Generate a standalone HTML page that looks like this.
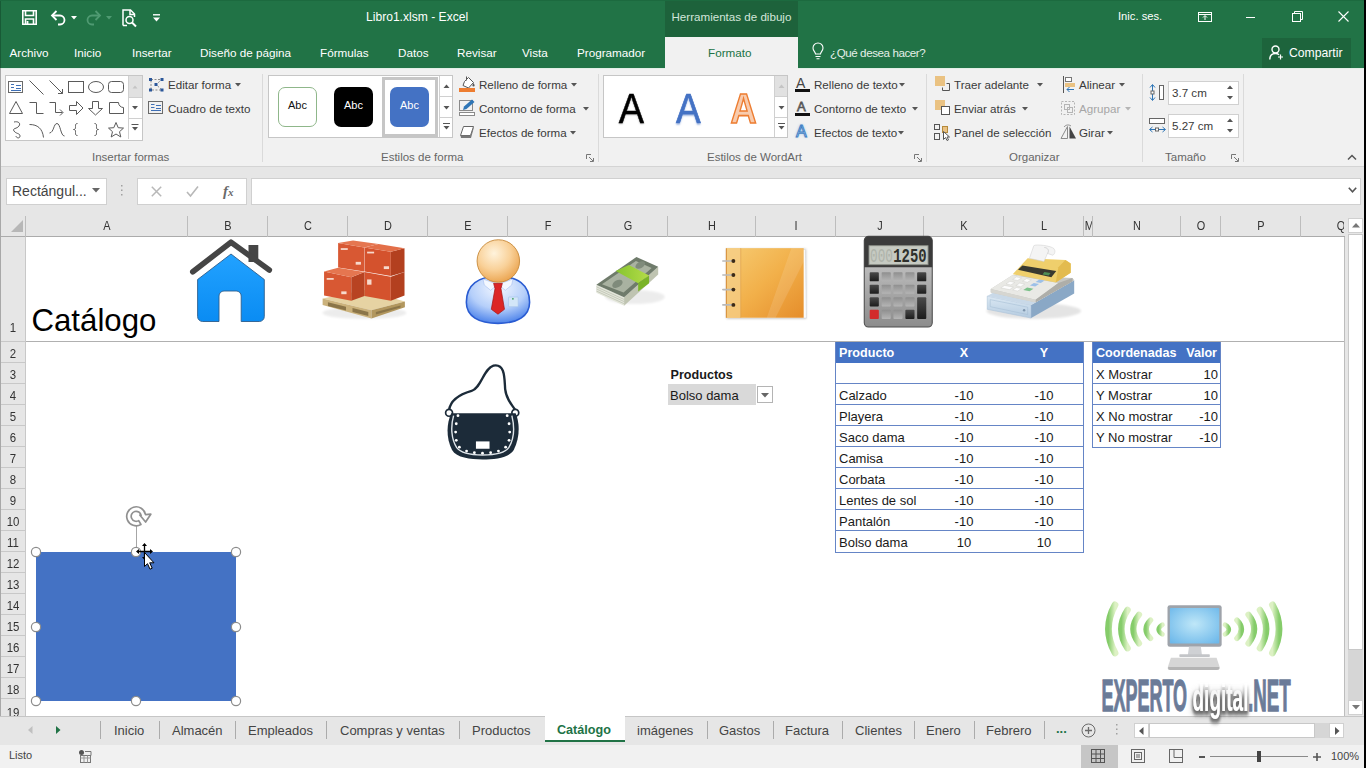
<!DOCTYPE html>
<html lang="es">
<head>
<meta charset="utf-8">
<title>Libro1.xlsm - Excel</title>
<style>
*{box-sizing:border-box;margin:0;padding:0}
html,body{width:1366px;height:768px;overflow:hidden;background:#fff}
body{font-family:"Liberation Sans",sans-serif;font-size:12px;color:#444;position:relative}
.a{position:absolute}
.t{position:absolute;white-space:nowrap;line-height:1}
svg{position:absolute;overflow:visible}
/* title */
#title{left:0;top:0;width:1366px;height:68px;background:#217346}
#ctx{left:665px;top:0;width:133px;height:37px;background:#1d623b}
#fmt{left:665px;top:37px;width:133px;height:31px;background:#f1f1f1}
#share{left:1262px;top:38px;width:89px;height:30px;background:#1d643c}
.tt{color:#fff;font-size:12.5px}
.tab{color:#fff;font-size:11.7px;top:47px}
/* ribbon */
#ribbon{left:0;top:68px;width:1366px;height:99px;background:#f1f1f1;border-bottom:1px solid #d4d4d4}
.sep{width:1px;top:74px;height:88px;background:#dadada}
.rl{font-size:11.6px;color:#3a3a3a}
.gl{font-size:11.5px;color:#666;top:152px}
.gal{background:#fff;border:1px solid #c6c6c6}
/* formula bar */
#fbar{left:0;top:167px;width:1366px;height:48px;background:#e6e6e6}
.box{background:#fff;border:1px solid #d0d0d0}
/* grid */
#colh{left:0;top:215px;width:1345px;height:22px;background:#e6e6e6;border-bottom:1px solid #ababab}
#rowh{left:0;top:237px;width:26px;height:479px;background:#e6e6e6;border-right:1px solid #c8c8c8}
.ch{font-size:13px;color:#333;top:219px;text-align:center;transform:scaleX(.84)}
.rh{font-size:13px;color:#333;width:21px;text-align:right;left:0;transform:scaleX(.88)}
.cv{width:1px;top:216px;height:21px;background:#bdbdbd}
.rv{height:1px;left:0;width:25px;background:#c8c8c8}
.c{font-size:14px;color:#1a1a1a}
/* bottom */
#tabs{left:0;top:716px;width:1366px;height:29px;background:#e6e6e6;border-top:1px solid #c6c6c6}
#status{left:0;top:745px;width:1366px;height:23px;background:#f1f1f1}
.st{font-size:13px;color:#444;top:723.5px}
.sv{width:1px;top:721px;height:18px;background:#ababab}
</style>
</head>
<body>
<!-- TITLE BAR -->
<div class="a" id="title"></div>
<div class="a" id="ctx"></div>
<div class="a" id="fmt"></div>
<div class="a" id="share"></div>
<div class="t tt" style="left:366px;top:11px;font-size:12.1px">Libro1.xlsm  -  Excel</div>
<div class="t tt" style="left:671.5px;top:11px;font-size:11.6px;color:#d3e6da">Herramientas de dibujo</div>
<div class="t tt" style="left:1118px;top:11px;font-size:11.2px">Inic. ses.</div>
<div class="t tab" style="left:9.5px">Archivo</div>
<div class="t tab" style="left:74px">Inicio</div>
<div class="t tab" style="left:132px">Insertar</div>
<div class="t tab" style="left:200px">Diseño de página</div>
<div class="t tab" style="left:320px">Fórmulas</div>
<div class="t tab" style="left:398px">Datos</div>
<div class="t tab" style="left:457px">Revisar</div>
<div class="t tab" style="left:522px">Vista</div>
<div class="t tab" style="left:577px">Programador</div>
<div class="t tab" style="left:708px;color:#217346">Formato</div>
<div class="t tab" style="left:830px;color:#e4efe8;font-size:11.600px;letter-spacing:-.42px;top:47px">¿Qué desea hacer?</div>
<div class="t tab" style="left:1289px;font-size:12.200px;top:46.500px">Compartir</div>
<!-- QAT -->
<svg class="a" style="left:22px;top:10px" width="15" height="15" fill="none" stroke="#fff" stroke-width="1.600"><path d="M.8.8h13.400v13.400h-13.400z"/><path d="M3.500 1v4.500h8v-4.500" /><path d="M3.500 14v-5h8v5" /><path d="M5.500 11v3" stroke-width="1.800"/></svg>
<svg class="a" style="left:51px;top:10px" width="15" height="15" fill="none" stroke="#fff" stroke-width="1.800"><path d="M1 5.500h8a4.500 4.500 0 0 1 0 9h-2"/><path d="M5.500 1l-4.500 4.500 4.500 4.500"/></svg>
<svg class="a" style="left:71px;top:16px" width="6" height="4"><path d="M0 0h6l-3 3.500z" fill="#fff"/></svg>
<svg class="a" style="left:86px;top:10px" width="15" height="15" fill="none" stroke="#4f9a72" stroke-width="1.800"><path d="M14 5.500h-8a4.500 4.500 0 0 0 0 9h2"/><path d="M9.500 1l4.500 4.500-4.500 4.500"/></svg>
<svg class="a" style="left:106px;top:16px" width="6" height="4"><path d="M0 0h6l-3 3.500z" fill="#4f9a72"/></svg>
<svg class="a" style="left:122px;top:9px" width="16" height="18" fill="none" stroke="#fff" stroke-width="1.500"><path d="M1 16.500v-15.500h7.500l4 4v3"/><path d="M8 1v4.500h4.500"/><circle cx="7.500" cy="11" r="3.500"/><path d="M10 13.500l4 4" stroke-width="2"/><path d="M1 16.500h4"/></svg>
<svg class="a" style="left:153px;top:14px" width="7" height="8"><path d="M0 .8h7" stroke="#fff" stroke-width="1.400"/><path d="M0 3.500h7l-3.500 4z" fill="#fff"/></svg>
<!-- window controls -->
<svg class="a" style="left:1198px;top:12px" width="14" height="10" fill="none" stroke="#fff" stroke-width="1"><rect x=".5" y=".5" width="13" height="9"/><path d="M.5 2.500h13"/><path d="M7 8v-4M5 5.500l2-2 2 2" /></svg>
<div class="a" style="left:1246px;top:17px;width:9px;height:1px;background:#fff"></div>
<svg class="a" style="left:1292px;top:11px" width="11" height="11" fill="none" stroke="#fff" stroke-width="1"><rect x=".5" y="2.500" width="8" height="8"/><path d="M2.500 2.500v-2h8v8h-2"/></svg>
<svg class="a" style="left:1338px;top:11px" width="11" height="11" fill="none" stroke="#fff" stroke-width="1.100"><path d="M.5.5l10 10M10.500.5l-10 10"/></svg>
<svg class="a" style="left:812px;top:43px" width="12" height="17" fill="none" stroke="#fff" stroke-width="1.100"><path d="M3.500 11c0-2-2.500-3-2.500-6a5 5 0 0 1 10 0c0 3-2.500 4-2.500 6z"/><path d="M3.500 13.500h5M4.500 15.800h3"/></svg>
<svg class="a" style="left:1269px;top:45px" width="15" height="15" fill="none" stroke="#fff" stroke-width="1.400"><circle cx="6.500" cy="4.500" r="3.500"/><path d="M.8 14.500c0-4 2.500-6 5.700-6 1.500 0 2.500.4 3.500 1.200"/><path d="M11.500 9.500v5M9 12h5" stroke-width="1.200"/></svg>
<!-- RIBBON -->
<div class="a" id="ribbon"></div>
<div class="a" style="left:0;top:68px;width:665px;height:1px;background:#e2efe7"></div><div class="a" style="left:798px;top:68px;width:566px;height:1px;background:#e2efe7"></div>
<div class="a sep" style="left:262px"></div>
<div class="a sep" style="left:598px"></div>
<div class="a sep" style="left:926px"></div>
<div class="a sep" style="left:1142px"></div>
<div class="a sep" style="left:1243px"></div>
<!-- shapes gallery -->
<div class="a gal" style="left:5px;top:75px;width:138px;height:66px"></div>
<div class="a" style="left:128px;top:76px;width:14px;height:21px;background:#e1e1e1"></div>
<div class="a" style="left:128px;top:76px;width:1px;height:63px;background:#d0d0d0"></div>
<div class="a" style="left:128px;top:97px;width:14px;height:1px;background:#d0d0d0"></div>
<div class="a" style="left:128px;top:118px;width:14px;height:1px;background:#d0d0d0"></div>
<svg class="a" style="left:5px;top:75px" width="138" height="65" fill="none" stroke="#5a5a5a" stroke-width="1">
 <!-- row1 -->
 <rect x="3.5" y="6.5" width="14" height="11" stroke="#6a6a6a"/><path d="M6 9.5h3M6 12.5h3M11 10.5h5M11 13.5h5M6 15.5h10" stroke="#3f6fb5" stroke-width="1"/>
 <path d="M24.5 5.5l14 14"/>
 <path d="M44.5 5.5l13 13M57.5 14v4.5h-4.500"/>
 <rect x="63.500" y="6.500" width="15" height="11"/>
 <ellipse cx="91" cy="12" rx="7.500" ry="5.500"/>
 <rect x="103.500" y="6.500" width="15" height="11" rx="3"/>
 <!-- row2 -->
 <path d="M11 26.500l6.500 12h-13z"/>
 <path d="M24.500 27.500h7v11h7"/>
 <path d="M44.500 27.500h6v10h7M55 34.500l3 3-3 3"/>
 <path d="M64.500 30.500h7v-4l6.500 6.500-6.500 6.500v-4h-7z"/>
 <path d="M87.500 26.500h6v7h4l-7 6.500-7-6.500h4z"/>
 <path d="M104.500 27.500h9a5 5 0 0 0 5 5v6h-14z"/>
 <!-- row3 -->
 <path d="M9 47c4-1 7 1 5 4s-7 2-5 5 6 2 6 5-4 2-4 0"/>
 <path d="M24.500 49.500c8 0 13 4 14 13"/>
 <path d="M44.500 58c4.500-.5 4-9.500 7.500-9.500s3.500 12.500 7.500 12.500"/>
 <path d="M72.500 48.500c-2 0-2 1-2 3s0 3-2 3c2 0 2 1 2 3s0 3 2 3"/>
 <path d="M89.500 48.500c2 0 2 1 2 3s0 3 2 3c-2 0-2 1-2 3s0 3-2 3"/>
 <path d="M111 47.500l2.200 5.200 5.300.4-4 3.600 1.300 5.300-4.800-3-4.800 3 1.300-5.300-4-3.600 5.300-.4z"/>
 <!-- scroll arrows -->
 <path d="M127.500 13.500l2.500-3 2.500 3z" fill="#c4c4c4" stroke="none"/>
 <path d="M127 31l3 3.500 3-3.500z" fill="#555" stroke="none"/>
 <path d="M126.500 49.500h7" stroke="#555"/><path d="M127 52l3 3.500 3-3.500z" fill="#555" stroke="none"/>
</svg>
<!-- Editar forma / cuadro de texto -->
<svg class="a" style="left:148px;top:76px" width="17" height="17" fill="none"><path d="M3 3.500h11l-6 5 6 5.500h-11z" stroke="#8a8a8a" stroke-dasharray="2 1.500"/><g fill="#2b579a"><rect x="1" y="2" width="3" height="3"/><rect x="12.500" y="2" width="3" height="3"/><rect x="6.500" y="7" width="3" height="3"/><rect x="1" y="12.500" width="3" height="3"/><rect x="12.500" y="12.500" width="3" height="3"/></g></svg>
<div class="t rl" style="left:168px;top:79px">Editar forma</div>
<svg class="a" style="left:235px;top:83px" width="6" height="4"><path d="M0 0h6l-3 3.500z" fill="#555"/></svg>
<svg class="a" style="left:148px;top:100px" width="16" height="16" fill="none"><rect x=".5" y="1.500" width="14" height="12" stroke="#6a6a6a"/><path d="M3 4.500h3.500M3 7.500h3.500M8 5.500h5M8 8.500h5M3 10.500h10" stroke="#3f6fb5"/></svg>
<div class="t rl" style="left:168px;top:103px">Cuadro de texto</div>
<div class="t gl" style="left:92px">Insertar formas</div>
<!-- shape styles -->
<div class="a gal" style="left:268px;top:75px;width:185px;height:63px"></div>
<div class="a" style="left:382px;top:77px;width:56px;height:60px;border:3px solid #c6c6c6;background:#fff"></div>
<div class="a" style="left:439px;top:76px;width:1px;height:61px;background:#d0d0d0"></div>
<div class="a" style="left:439px;top:96px;width:13px;height:1px;background:#d0d0d0"></div>
<div class="a" style="left:439px;top:117px;width:13px;height:1px;background:#d0d0d0"></div>
<div class="a" style="left:278px;top:87px;width:39px;height:40px;border:1px solid #8fb78a;border-radius:7px;background:#fff"></div>
<div class="a" style="left:334px;top:87px;width:39px;height:40px;border-radius:7px;background:#000"></div>
<div class="a" style="left:390px;top:87px;width:39px;height:40px;border-radius:7px;background:#4472c4"></div>
<div class="t" style="left:288px;top:99.5px;font-size:11px;color:#111">Abc</div>
<div class="t" style="left:344px;top:99.5px;font-size:11px;color:#fff">Abc</div>
<div class="t" style="left:400px;top:99.5px;font-size:11px;color:#fff">Abc</div>
<svg class="a" style="left:440px;top:76px" width="13" height="61"><path d="M3.500 12l3-3.500 3 3.500z" fill="#555"/><path d="M3.500 30l3 3.500 3-3.500z" fill="#555"/><path d="M3 47.500h7" stroke="#555"/><path d="M3.500 50l3 3.500 3-3.500z" fill="#555"/></svg>
<svg class="a" style="left:459px;top:75px" width="17" height="18" fill="none"><path d="M5.500 6.500l4-4 5 5-5 5.500-5.500-2.500z" stroke="#555" fill="#fff"/><path d="M7.500 1.500v4" stroke="#555"/><path d="M14.500 8c1.500 2 1.500 3.500 0 3.500s-1.500-1.500 0-3.500z" fill="#555"/><rect x="0" y="13" width="16" height="4" fill="#ed7d31"/></svg>
<div class="t rl" style="left:479px;top:79px">Relleno de forma</div>
<svg class="a" style="left:571px;top:83px" width="6" height="4"><path d="M0 0h6l-3 3.500z" fill="#555"/></svg>
<svg class="a" style="left:459px;top:99px" width="17" height="18" fill="none"><rect x=".5" y="1.500" width="13" height="10" stroke="#8a8a8a"/><path d="M4 11l1-3.500 8-7 2.500 2.500-8 7z" fill="#2e75b6"/><rect x=".5" y="13.500" width="15" height="3" stroke="#8a8a8a" fill="#fff"/></svg>
<div class="t rl" style="left:479px;top:103px">Contorno de forma</div>
<svg class="a" style="left:583px;top:107px" width="6" height="4"><path d="M0 0h6l-3 3.500z" fill="#555"/></svg>
<svg class="a" style="left:459px;top:124px" width="17" height="16" fill="none"><path d="M4.500 2.500h10l-3 9h-10z" fill="#fff" stroke="#666"/><path d="M1.500 11.500h10l3-9v2.500l-2.500 9h-10z" fill="#777"/></svg>
<div class="t rl" style="left:479px;top:127px">Efectos de forma</div>
<svg class="a" style="left:570px;top:131px" width="6" height="4"><path d="M0 0h6l-3 3.500z" fill="#555"/></svg>
<div class="t gl" style="left:381px">Estilos de forma</div>
<svg class="a" style="left:586px;top:154px" width="8" height="8" fill="none" stroke="#777"><path d="M.5 5v-4.500h4.500M3 3l4 4M7.500 4v3.500h-3.500"/></svg>
<!-- wordart -->
<div class="a gal" style="left:603px;top:75px;width:185px;height:63px"></div>
<div class="a" style="left:774px;top:76px;width:13px;height:21px;background:#e1e1e1"></div>
<div class="a" style="left:774px;top:76px;width:1px;height:61px;background:#d0d0d0"></div>
<div class="a" style="left:774px;top:96px;width:13px;height:1px;background:#d0d0d0"></div>
<div class="a" style="left:774px;top:117px;width:13px;height:1px;background:#d0d0d0"></div>
<div class="t" style="left:617px;top:86.800px;font-size:43px;color:#000;transform:scaleX(.88);-webkit-text-stroke:.5px #000;text-shadow:0 1px 2px rgba(0,0,0,.35)">A</div>
<div class="t" style="left:673.5px;top:86.800px;font-size:43px;color:#4472c4;transform:scaleX(.86);-webkit-text-stroke:.7px #4472c4;text-shadow:0 2px 2px rgba(68,114,196,.45)">A</div>
<div class="t" style="left:728px;top:86.800px;font-size:43px;font-weight:bold;color:#f8cbad;transform:scaleX(.84);-webkit-text-stroke:1.600px #ed7d31">A</div>
<svg class="a" style="left:775px;top:76px" width="13" height="61"><path d="M3.500 12l3-3.500 3 3.500z" fill="#c4c4c4"/><path d="M3.500 30l3 3.500 3-3.500z" fill="#555"/><path d="M3 47.500h7" stroke="#555"/><path d="M3.500 50l3 3.500 3-3.500z" fill="#555"/></svg>
<div class="t" style="left:796px;top:76px;font-size:14px;color:#444">A</div><div class="a" style="left:795px;top:89px;width:15px;height:3px;background:#111"></div>
<div class="t rl" style="left:814px;top:79px">Relleno de texto</div>
<svg class="a" style="left:899px;top:83px" width="6" height="4"><path d="M0 0h6l-3 3.500z" fill="#555"/></svg>
<div class="t" style="left:797px;top:100px;font-size:13px;color:#fff;-webkit-text-stroke:.8px #555">A</div><div class="a" style="left:795px;top:113px;width:15px;height:3px;background:#111"></div>
<div class="t rl" style="left:814px;top:103px">Contorno de texto</div>
<svg class="a" style="left:912px;top:107px" width="6" height="4"><path d="M0 0h6l-3 3.500z" fill="#555"/></svg>
<div class="t" style="left:796px;top:124px;font-size:16px;color:#fff;-webkit-text-stroke:1px #3f7fc4;text-shadow:0 0 3px #7fb2e6">A</div>
<div class="t rl" style="left:814px;top:127px">Efectos de texto</div>
<svg class="a" style="left:898px;top:131px" width="6" height="4"><path d="M0 0h6l-3 3.500z" fill="#555"/></svg>
<div class="t gl" style="left:707px">Estilos de WordArt</div>
<svg class="a" style="left:914px;top:154px" width="8" height="8" fill="none" stroke="#777"><path d="M.5 5v-4.500h4.500M3 3l4 4M7.500 4v3.500h-3.500"/></svg>
<!-- organizar -->
<svg class="a" style="left:935px;top:76px" width="16" height="16" fill="none"><rect x="0" y="0" width="10" height="10" fill="#eac282"/><path d="M11.500 7.500h3v7h-7v-3" stroke="#555"/></svg>
<div class="t rl" style="left:954px;top:79px">Traer adelante</div>
<svg class="a" style="left:1037px;top:83px" width="6" height="4"><path d="M0 0h6l-3 3.500z" fill="#555"/></svg>
<svg class="a" style="left:935px;top:100px" width="16" height="16" fill="none"><rect x="0" y="0" width="10" height="10" fill="#eac282"/><rect x="6.500" y="6.500" width="8" height="8" fill="#fff" stroke="#555"/></svg>
<div class="t rl" style="left:954px;top:103px">Enviar atrás</div>
<svg class="a" style="left:1022px;top:107px" width="6" height="4"><path d="M0 0h6l-3 3.500z" fill="#555"/></svg>
<svg class="a" style="left:934px;top:124px" width="17" height="17" fill="none" stroke="#555"><rect x=".5" y=".5" width="5" height="5"/><rect x=".5" y="9.500" width="5" height="6"/><rect x="8.500" y="2.500" width="5" height="6" fill="#eac282" stroke="#b58a3c"/><path d="M9.500 7.500v8l2-2 1.500 3 1.500-.7-1.500-2.800h2.500z" fill="#fff"/></svg>
<div class="t rl" style="left:954px;top:127px">Panel de selección</div>
<svg class="a" style="left:1062px;top:76px" width="14" height="17" fill="none"><path d="M1.500 0v17" stroke="#555"/><rect x="3.500" y="1.500" width="6" height="4" stroke="#777" fill="#fff"/><rect x="3" y="7" width="10" height="4" fill="#eac282"/><path d="M12 13.500h-7M7.500 11l-2.500 2.500 2.500 2.500" stroke="#2e75b6"/></svg>
<div class="t rl" style="left:1079px;top:79px">Alinear</div>
<svg class="a" style="left:1119px;top:83px" width="6" height="4"><path d="M0 0h6l-3 3.500z" fill="#555"/></svg>
<svg class="a" style="left:1060px;top:100px" width="17" height="17" fill="none" stroke="#b5b5b5"><rect x="1.500" y="1.500" width="13" height="13" stroke-dasharray="2 1.500"/><rect x="4.500" y="4.500" width="5" height="5"/><rect x="7.500" y="7.500" width="5" height="5"/></svg>
<div class="t rl" style="left:1079px;top:103px;color:#a6a6a6">Agrupar</div>
<svg class="a" style="left:1125px;top:107px" width="6" height="4"><path d="M0 0h6l-3 3.500z" fill="#b5b5b5"/></svg>
<svg class="a" style="left:1060px;top:124px" width="17" height="16" fill="none"><path d="M7.500 2.500v12h-6.500z" stroke="#8a8a8a"/><path d="M9.500 2.500v12h6.500z" fill="#444"/><path d="M4 3c2-2.500 5-2.500 7-1" stroke="#8a8a8a"/></svg>
<div class="t rl" style="left:1079px;top:127px">Girar</div>
<svg class="a" style="left:1107px;top:131px" width="6" height="4"><path d="M0 0h6l-3 3.500z" fill="#555"/></svg>
<div class="t gl" style="left:1009px">Organizar</div>
<!-- tamaño -->
<svg class="a" style="left:1149px;top:83px" width="17" height="19" fill="none"><path d="M3.500 2v15M1 4.500l2.500-3 2.500 3M1 14.500l2.500 3 2.500-3" stroke="#2e75b6"/><rect x="2" y="8" width="3" height="3" fill="#fff" stroke="#666"/><rect x="10.500" y="2.500" width="4" height="14" stroke="#666" fill="#fff"/></svg>
<div class="a box" style="left:1168px;top:81px;width:71px;height:24px"></div>
<div class="t rl" style="left:1172px;top:87px">3.7 cm</div>
<svg class="a" style="left:1227px;top:85px" width="6" height="16"><path d="M0 4l3-3.500 3 3.500zM0 11l3 3.500 3-3.500z" fill="#555"/></svg>
<svg class="a" style="left:1148px;top:117px" width="19" height="17" fill="none"><rect x="1.500" y="1.500" width="15" height="5" stroke="#666" fill="#fff"/><path d="M2 12.500h15M4.500 10l-3 2.500 3 2.500M14.500 10l3 2.500-3 2.500" stroke="#2e75b6"/><rect x="7.500" y="11" width="3" height="3" fill="#fff" stroke="#666"/></svg>
<div class="a box" style="left:1168px;top:114px;width:71px;height:24px"></div>
<div class="t rl" style="left:1172px;top:120px">5.27 cm</div>
<svg class="a" style="left:1227px;top:118px" width="6" height="16"><path d="M0 4l3-3.500 3 3.500zM0 11l3 3.500 3-3.500z" fill="#555"/></svg>
<div class="t gl" style="left:1165px">Tamaño</div>
<svg class="a" style="left:1231px;top:154px" width="8" height="8" fill="none" stroke="#777"><path d="M.5 5v-4.500h4.500M3 3l4 4M7.500 4v3.500h-3.500"/></svg>
<svg class="a" style="left:1347px;top:154px" width="10" height="6" fill="none" stroke="#555" stroke-width="1.500"><path d="M1 5.500l4-4 4 4"/></svg>
<!-- FORMULA BAR -->
<div class="a" id="fbar"></div>
<div class="a box" style="left:6px;top:178px;width:101px;height:27px"></div>
<div class="t" style="left:12px;top:184px;font-size:14px;color:#444">Rectángul...</div>
<svg class="a" style="left:92px;top:188px" width="8" height="5"><path d="M0 0h8l-4 4.500z" fill="#666"/></svg>
<svg class="a" style="left:121px;top:185px" width="2" height="12" fill="#a0a0a0"><rect y="0" width="1.500" height="1.500"/><rect y="4.500" width="1.500" height="1.500"/><rect y="9" width="1.500" height="1.500"/></svg>
<div class="a box" style="left:137px;top:178px;width:110px;height:27px"></div>
<svg class="a" style="left:151px;top:186px" width="11" height="11" fill="none" stroke="#b8b8b8" stroke-width="1.500"><path d="M.8.8l9.400 9.400M10.200.8l-9.400 9.400"/></svg>
<svg class="a" style="left:186px;top:186px" width="13" height="11" fill="none" stroke="#b8b8b8" stroke-width="1.600"><path d="M1 6l3.500 4 7.500-9.500"/></svg>
<div class="t" style="left:223px;top:183.500px;font-family:'Liberation Serif',serif;font-style:italic;font-weight:bold;font-size:15px;color:#6a6a6a">f<span style="font-size:11px">x</span></div>
<div class="a box" style="left:251px;top:178px;width:1110px;height:27px"></div>
<svg class="a" style="left:1348px;top:187px" width="9" height="6" fill="none" stroke="#555" stroke-width="1.600"><path d="M.8.8l3.700 4 3.700-4"/></svg>
<!-- GRID -->
<div class="a" id="colh"></div>
<div class="a" id="rowh"></div>
<svg class="a" style="left:11px;top:220px" width="12" height="12"><path d="M12 0v12h-12z" fill="#b7b7b7"/></svg>
<div class="t ch" style="left:26px;width:162px">A</div>
<div class="a cv" style="left:187px"></div>
<div class="t ch" style="left:188px;width:80px">B</div>
<div class="a cv" style="left:267px"></div>
<div class="t ch" style="left:268px;width:80px">C</div>
<div class="a cv" style="left:347px"></div>
<div class="t ch" style="left:348px;width:80px">D</div>
<div class="a cv" style="left:427px"></div>
<div class="t ch" style="left:428px;width:80px">E</div>
<div class="a cv" style="left:507px"></div>
<div class="t ch" style="left:508px;width:80px">F</div>
<div class="a cv" style="left:587px"></div>
<div class="t ch" style="left:588px;width:80px">G</div>
<div class="a cv" style="left:667px"></div>
<div class="t ch" style="left:668px;width:88px">H</div>
<div class="a cv" style="left:755px"></div>
<div class="t ch" style="left:756px;width:80px">I</div>
<div class="a cv" style="left:835px"></div>
<div class="t ch" style="left:836px;width:88px">J</div>
<div class="a cv" style="left:923px"></div>
<div class="t ch" style="left:924px;width:80px">K</div>
<div class="a cv" style="left:1003px"></div>
<div class="t ch" style="left:1004px;width:80px">L</div>
<div class="a cv" style="left:1083px"></div>
<div class="t ch" style="left:1084px;width:9px;overflow:hidden;text-align:left">M</div>
<div class="a cv" style="left:1092px"></div>
<div class="t ch" style="left:1093px;width:88px">N</div>
<div class="a cv" style="left:1180px"></div>
<div class="t ch" style="left:1181px;width:40px">O</div>
<div class="a cv" style="left:1220px"></div>
<div class="t ch" style="left:1221px;width:80px">P</div>
<div class="a cv" style="left:1300px"></div>
<div class="a" style="left:1301px;top:219px;width:43px;height:16px;overflow:hidden"><div class="t ch" style="left:0;top:0;width:80px">Q</div></div>
<div class="a cv" style="left:25px"></div>
<div class="t rh" style="top:320.500px;width:26px;text-align:center">1</div>
<div class="a rv" style="top:341px"></div>
<div class="t rh" style="top:347px;width:26px;text-align:center">2</div>
<div class="a rv" style="top:362px"></div>
<div class="t rh" style="top:368px;width:26px;text-align:center">3</div>
<div class="a rv" style="top:383px"></div>
<div class="t rh" style="top:389px;width:26px;text-align:center">4</div>
<div class="a rv" style="top:404px"></div>
<div class="t rh" style="top:410px;width:26px;text-align:center">5</div>
<div class="a rv" style="top:425px"></div>
<div class="t rh" style="top:431px;width:26px;text-align:center">6</div>
<div class="a rv" style="top:446px"></div>
<div class="t rh" style="top:452px;width:26px;text-align:center">7</div>
<div class="a rv" style="top:467px"></div>
<div class="t rh" style="top:473px;width:26px;text-align:center">8</div>
<div class="a rv" style="top:488px"></div>
<div class="t rh" style="top:494px;width:26px;text-align:center">9</div>
<div class="a rv" style="top:509px"></div>
<div class="t rh" style="top:515px;width:26px;text-align:center">10</div>
<div class="a rv" style="top:530px"></div>
<div class="t rh" style="top:536px;width:26px;text-align:center">11</div>
<div class="a rv" style="top:551px"></div>
<div class="t rh" style="top:557px;width:26px;text-align:center">12</div>
<div class="a rv" style="top:572px"></div>
<div class="t rh" style="top:578px;width:26px;text-align:center">13</div>
<div class="a rv" style="top:593px"></div>
<div class="t rh" style="top:599px;width:26px;text-align:center">14</div>
<div class="a rv" style="top:614px"></div>
<div class="t rh" style="top:620px;width:26px;text-align:center">15</div>
<div class="a rv" style="top:635px"></div>
<div class="t rh" style="top:641px;width:26px;text-align:center">16</div>
<div class="a rv" style="top:656px"></div>
<div class="t rh" style="top:662px;width:26px;text-align:center">17</div>
<div class="a rv" style="top:677px"></div>
<div class="t rh" style="top:683px;width:26px;text-align:center">18</div>
<div class="a rv" style="top:698px"></div>
<div class="t rh" style="top:706px;width:26px;text-align:center">19</div>
<div class="a" style="left:26px;top:341px;width:1318px;height:1px;background:#b0b0b0"></div>
<div class="a" style="left:1345px;top:215px;width:21px;height:501px;background:#e6e6e6"></div>
<div class="a" style="left:1344px;top:237px;width:1px;height:479px;background:#bdbdbd"></div>
<div class="a box" style="left:1348px;top:218px;width:15px;height:15px"></div>
<svg class="a" style="left:1351.500px;top:223px" width="8" height="5"><path d="M0 4.500l4-4.500 4 4.500z" fill="#777"/></svg>
<div class="a box" style="left:1348px;top:234px;width:15px;height:416px;border-color:#c8c8c8"></div>
<div class="a" style="left:1348px;top:650px;width:15px;height:50px;background:#d6d6d6"></div>
<div class="a box" style="left:1348px;top:700px;width:15px;height:15px"></div>
<svg class="a" style="left:1351.500px;top:705px" width="8" height="5"><path d="M0 0l4 4.500 4-4.500z" fill="#777"/></svg>
<!-- CELLS -->
<div class="t" style="left:31.500px;top:305.200px;font-size:31.200px;color:#000">Catálogo</div>
<div class="t c" style="left:670.500px;top:368.700px;font-weight:bold;font-size:12.600px">Productos</div>
<div class="a" style="left:668px;top:384px;width:88px;height:21px;background:#d9d9d9"></div>
<div class="t c" style="left:670px;top:389px;font-size:13px">Bolso dama</div>
<div class="a" style="left:757px;top:386px;width:16px;height:17px;background:#fff;border:1px solid #b4b4b4"></div>
<svg class="a" style="left:761px;top:393px" width="8" height="5"><path d="M0 0h8l-4 4.500z" fill="#666"/></svg>
<div class="a" style="left:836px;top:342px;width:248px;height:21px;background:#4472c4"></div>
<div class="a" style="left:835px;top:342px;width:249px;height:211px;border:1px solid #6585c6;border-top:none"></div>
<div class="a" style="left:836px;top:383px;width:247px;height:1px;background:#6585c6"></div>
<div class="a" style="left:836px;top:404px;width:247px;height:1px;background:#6585c6"></div>
<div class="a" style="left:836px;top:425px;width:247px;height:1px;background:#6585c6"></div>
<div class="a" style="left:836px;top:446px;width:247px;height:1px;background:#6585c6"></div>
<div class="a" style="left:836px;top:467px;width:247px;height:1px;background:#6585c6"></div>
<div class="a" style="left:836px;top:488px;width:247px;height:1px;background:#6585c6"></div>
<div class="a" style="left:836px;top:509px;width:247px;height:1px;background:#6585c6"></div>
<div class="a" style="left:836px;top:530px;width:247px;height:1px;background:#6585c6"></div>
<div class="t c" style="left:839px;top:347px;font-weight:bold;color:#fff;font-size:12.600px">Producto</div>
<div class="t c" style="left:924px;top:347px;width:80px;text-align:center;font-weight:bold;color:#fff;font-size:12.600px">X</div>
<div class="t c" style="left:1004px;top:347px;width:80px;text-align:center;font-weight:bold;color:#fff;font-size:12.600px">Y</div>
<div class="t c" style="left:839px;top:389px;font-size:13px">Calzado</div>
<div class="t c" style="left:924px;top:389px;width:80px;text-align:center;font-size:13px">-10</div>
<div class="t c" style="left:1004px;top:389px;width:80px;text-align:center;font-size:13px">-10</div>
<div class="t c" style="left:839px;top:410px;font-size:13px">Playera</div>
<div class="t c" style="left:924px;top:410px;width:80px;text-align:center;font-size:13px">-10</div>
<div class="t c" style="left:1004px;top:410px;width:80px;text-align:center;font-size:13px">-10</div>
<div class="t c" style="left:839px;top:431px;font-size:13px">Saco dama</div>
<div class="t c" style="left:924px;top:431px;width:80px;text-align:center;font-size:13px">-10</div>
<div class="t c" style="left:1004px;top:431px;width:80px;text-align:center;font-size:13px">-10</div>
<div class="t c" style="left:839px;top:452px;font-size:13px">Camisa</div>
<div class="t c" style="left:924px;top:452px;width:80px;text-align:center;font-size:13px">-10</div>
<div class="t c" style="left:1004px;top:452px;width:80px;text-align:center;font-size:13px">-10</div>
<div class="t c" style="left:839px;top:473px;font-size:13px">Corbata</div>
<div class="t c" style="left:924px;top:473px;width:80px;text-align:center;font-size:13px">-10</div>
<div class="t c" style="left:1004px;top:473px;width:80px;text-align:center;font-size:13px">-10</div>
<div class="t c" style="left:839px;top:494px;font-size:13px">Lentes de sol</div>
<div class="t c" style="left:924px;top:494px;width:80px;text-align:center;font-size:13px">-10</div>
<div class="t c" style="left:1004px;top:494px;width:80px;text-align:center;font-size:13px">-10</div>
<div class="t c" style="left:839px;top:515px;font-size:13px">Pantalón</div>
<div class="t c" style="left:924px;top:515px;width:80px;text-align:center;font-size:13px">-10</div>
<div class="t c" style="left:1004px;top:515px;width:80px;text-align:center;font-size:13px">-10</div>
<div class="t c" style="left:839px;top:536px;font-size:13px">Bolso dama</div>
<div class="t c" style="left:924px;top:536px;width:80px;text-align:center;font-size:13px">10</div>
<div class="t c" style="left:1004px;top:536px;width:80px;text-align:center;font-size:13px">10</div>
<div class="a" style="left:1093px;top:342px;width:128px;height:21px;background:#4472c4"></div>
<div class="a" style="left:1092px;top:342px;width:129px;height:106px;border:1px solid #6585c6;border-top:none"></div>
<div class="a" style="left:1093px;top:383px;width:127px;height:1px;background:#6585c6"></div>
<div class="a" style="left:1093px;top:404px;width:127px;height:1px;background:#6585c6"></div>
<div class="a" style="left:1093px;top:425px;width:127px;height:1px;background:#6585c6"></div>
<div class="t c" style="left:1096px;top:347px;font-weight:bold;color:#fff;font-size:12.600px">Coordenadas</div>
<div class="t c" style="left:1140px;top:347px;width:77px;text-align:right;font-weight:bold;color:#fff;font-size:12.600px">Valor</div>
<div class="t c" style="left:1096px;top:368px;font-size:13px">X Mostrar</div>
<div class="t c" style="left:1140px;top:368px;width:78px;text-align:right;font-size:13px">10</div>
<div class="t c" style="left:1096px;top:389px;font-size:13px">Y Mostrar</div>
<div class="t c" style="left:1140px;top:389px;width:78px;text-align:right;font-size:13px">10</div>
<div class="t c" style="left:1096px;top:410px;font-size:13px">X No mostrar</div>
<div class="t c" style="left:1140px;top:410px;width:78px;text-align:right;font-size:13px">-10</div>
<div class="t c" style="left:1096px;top:431px;font-size:13px">Y No mostrar</div>
<div class="t c" style="left:1140px;top:431px;width:78px;text-align:right;font-size:13px">-10</div>
<div class="a" style="left:36px;top:552px;width:200px;height:149px;background:#4472c4"></div>
<div class="a" style="left:136px;top:526px;width:1px;height:26px;background:#a6a6a6"></div>
<svg class="a" style="left:0;top:0" width="300" height="720"><circle cx="36" cy="552" r="4.600" fill="#fff" stroke="#8c8c8c" stroke-width="1.200"/><circle cx="136" cy="552" r="4.600" fill="#fff" stroke="#8c8c8c" stroke-width="1.200"/><circle cx="236" cy="552" r="4.600" fill="#fff" stroke="#8c8c8c" stroke-width="1.200"/><circle cx="36" cy="627" r="4.600" fill="#fff" stroke="#8c8c8c" stroke-width="1.200"/><circle cx="236" cy="627" r="4.600" fill="#fff" stroke="#8c8c8c" stroke-width="1.200"/><circle cx="36" cy="701" r="4.600" fill="#fff" stroke="#8c8c8c" stroke-width="1.200"/><circle cx="136" cy="701" r="4.600" fill="#fff" stroke="#8c8c8c" stroke-width="1.200"/><circle cx="236" cy="701" r="4.600" fill="#fff" stroke="#8c8c8c" stroke-width="1.200"/><path d="M145.560 514.650A9.500 9.500 0 1 0 140.950 524.530L138.700 520.630A5 5 0 1 1 141.120 515.430L139.800 515L145.600 522L150.800 514.200Z" fill="#fff" stroke="#909090" stroke-width="1.700" stroke-linejoin="round"/></svg>
<svg class="a" style="left:136px;top:543px" width="22" height="30"><g stroke="#000" stroke-width="1.300" fill="none"><path d="M1.500 8.500h14M8.500 1.500v14"/></g><g fill="#000"><path d="M8.500 0l-2.500 3h5zM8.500 17l-2.500-3h5zM0 8.500l3-2.500v5zM17 8.500l-3-2.500v5z"/></g><path d="M8.500 9.500v14l3-2.800 2.500 5.500 2.200-1-2.500-5.400h4.300z" fill="#fff" stroke="#000" stroke-width="1"/></svg>
<!-- IMAGES -->
<svg class="a" style="left:0;top:0" width="1366" height="768">
<defs>
<linearGradient id="gHouse" x1="0" y1="0" x2="0" y2="1"><stop offset="0" stop-color="#22a2ff"/><stop offset="1" stop-color="#0a8cf3"/></linearGradient>
<radialGradient id="gHead" cx=".4" cy=".32" r=".7"><stop offset="0" stop-color="#fff3dc"/><stop offset=".55" stop-color="#f9d199"/><stop offset="1" stop-color="#eba551"/></radialGradient>
<radialGradient id="gBody" cx=".5" cy=".25" r=".8"><stop offset="0" stop-color="#f4f8ff"/><stop offset=".55" stop-color="#b5cffa"/><stop offset="1" stop-color="#3f79e8"/></radialGradient>
<linearGradient id="gNote" x1="0" y1="0" x2="1" y2="1"><stop offset="0" stop-color="#f6cb72"/><stop offset=".5" stop-color="#f2b04a"/><stop offset="1" stop-color="#e58d2b"/></linearGradient>
<linearGradient id="gCalc" x1="0" y1="0" x2="0" y2="1"><stop offset="0" stop-color="#d2d2d2"/><stop offset="1" stop-color="#8c8c8c"/></linearGradient>
<linearGradient id="gKey" x1="0" y1="0" x2="0" y2="1"><stop offset="0" stop-color="#8f8f8f"/><stop offset="1" stop-color="#b5b5b5"/></linearGradient>
<linearGradient id="gKeyD" x1="0" y1="0" x2="0" y2="1"><stop offset="0" stop-color="#4a4a4a"/><stop offset="1" stop-color="#1c1c1c"/></linearGradient>
<linearGradient id="gBand" x1="0" y1="0" x2="1" y2="0"><stop offset="0" stop-color="#86c42f"/><stop offset="1" stop-color="#b4dc48"/></linearGradient>
<linearGradient id="gDraw" x1="0" y1="0" x2="0" y2="1"><stop offset="0" stop-color="#dbe8f3"/><stop offset="1" stop-color="#b4cbe0"/></linearGradient>
<filter id="fBlur" x="-20%" y="-20%" width="140%" height="140%"><feGaussianBlur stdDeviation="6"/></filter>
</defs>
<!-- HOUSE -->
<g>
<path d="M231 254L264.300 279.500V316.500a5 5 0 0 1-5 5H241.200V296a5 5 0 0 0-5-5H224a5 5 0 0 0-5 5V321.500H202.600a5 5 0 0 1-5-5V279.500Z" fill="url(#gHouse)" stroke="#2c5d8c" stroke-width=".9"/>
<rect x="248.500" y="245" width="9.800" height="17" fill="#454545"/>
<path d="M192.800 271.800L231 242.200L269.300 270" fill="none" stroke="#454545" stroke-width="5.600" stroke-linecap="round" stroke-linejoin="round"/>
</g>
<!-- BOXES zoom origin (180,232) s=1/5.692 -->
<g transform="translate(180,232) scale(.17568)">
<ellipse cx="1050" cy="460" rx="240" ry="35" fill="#000" opacity=".07" filter="url(#fBlur)"/>
<path d="M812 378L1050 330L1280 395L1090 445Z" fill="#e6d3a3"/>
<path d="M812 378L1090 445V492L812 416Z" fill="#cbb27c"/>
<path d="M1090 445L1280 395V428L1090 492Z" fill="#b2975e"/>
<path d="M842 400L945 425V447L842 421Z" fill="#8b7548"/><path d="M982 433L1072 455V478L982 455Z" fill="#8b7548"/>
<path d="M1115 455L1255 418V430L1115 470Z" fill="#8b7548"/>
<!-- bottom right box -->
<path d="M1050 228L1200 255V392L1050 365Z" fill="#d4522d"/><path d="M1200 255L1278 228V362L1200 392Z" fill="#b3401f"/>
<!-- top left box -->
<path d="M900 62L1048 88V225L900 202Z" fill="#d85833"/><path d="M900 62L985 48L1130 68L1048 88Z" fill="#e57650"/>
<!-- top right box -->
<path d="M1050 88L1200 112V250L1050 225Z" fill="#d4522d"/><path d="M1200 112L1278 92V228L1200 250Z" fill="#b3401f"/><path d="M1050 88L1130 68L1278 92L1200 112Z" fill="#e36f49"/>
<!-- bottom left box -->
<path d="M820 225L975 258V392L820 362Z" fill="#d85833"/><path d="M975 258L1050 228V365L975 392Z" fill="#b84322"/><path d="M820 225L900 203L1050 228L975 258Z" fill="#e57650"/>
<g fill="#f7d9cc"><rect x="918" y="338" width="30" height="16"/><rect x="1000" y="170" width="30" height="16"/><rect x="1160" y="195" width="30" height="16"/><rect x="1065" y="270" width="25" height="30"/><rect x="915" y="92" width="40" height="10"/><rect x="1065" y="112" width="40" height="10"/><rect x="835" y="262" width="40" height="10"/></g>
</g>
<!-- PERSON zoom origin (440,232) -->
<g transform="translate(440,232) scale(.17568)">
<path d="M150 400C150 300 220 252 330 252C440 252 510 300 510 400C510 480 440 520 330 520C220 520 150 480 150 400Z" fill="url(#gBody)" stroke="#2a5cd2" stroke-width="9"/>
<path d="M245 268L330 298L288 332L252 302Z" fill="#f4f8ff" stroke="#9db9ee" stroke-width="3"/><path d="M415 268L330 298L372 332L408 302Z" fill="#f4f8ff" stroke="#9db9ee" stroke-width="3"/>
<path d="M305 292H355L347 322L367 440L330 468L292 440L313 322Z" fill="#dc2626" stroke="#a31515" stroke-width="4"/>
<rect x="390" y="370" width="55" height="55" rx="4" fill="#d3e6f8" stroke="#9fc0e8" stroke-width="3"/><circle cx="415" cy="380" r="5" fill="#3a9a5a"/>
<circle cx="332" cy="165" r="121" fill="url(#gHead)" stroke="#c68736" stroke-width="5"/>
</g>
<!-- MONEY same origin -->
<g transform="translate(440,232) scale(.17568)">
<ellipse cx="1110" cy="370" rx="170" ry="40" fill="#000" opacity=".07" filter="url(#fBlur)"/>
<path d="M890 300L1048 372V420L890 346Z" fill="#e3e6da"/>
<path d="M1048 372L1242 198V242L1048 420Z" fill="#bfc4b1"/>
<path d="M890 300L1118 142L1242 198L1048 372Z" fill="#6f7b6b"/>
<path d="M922 298L1115 165L1205 205L1045 345Z" fill="#a9b2a1"/>
<ellipse cx="1010" cy="295" rx="32" ry="20" fill="#7f8b7b" transform="rotate(-30 1010 295)"/><ellipse cx="1140" cy="188" rx="30" ry="18" fill="#7f8b7b" transform="rotate(-30 1140 188)"/>
<path d="M890 312L1048 384M890 324L1048 396M890 336L1048 408" stroke="#b9bdae" stroke-width="4"/>
<path d="M1000 222L1075 188L1190 248L1128 292Z" fill="url(#gBand)"/><path d="M1128 292L1190 248V292L1128 338Z" fill="#7ab327"/>
</g>
<!-- NOTEBOOK zoom origin (700,232) -->
<g transform="translate(700,232) scale(.17568)">
<rect x="150" y="95" width="455" height="400" fill="#000" opacity=".18" filter="url(#fBlur)"/>
<path d="M160 100H600L606 490H160Z" fill="#fbfbfb" stroke="#d5d5d5" stroke-width="3"/>
<rect x="150" y="92" width="440" height="396" fill="url(#gNote)"/>
<rect x="150" y="92" width="82" height="396" fill="#f5cf8a" opacity=".75"/><path d="M232 92V488" stroke="#e0a24a" stroke-width="4"/>
<path d="M150 92V488" stroke="#d58f3a" stroke-width="6"/>
<path d="M430 488L590 170V92H520L380 488Z" fill="#fff" opacity=".12"/>
<g stroke="#b9b9b9" stroke-width="9" stroke-linecap="round"><path d="M130 165H188M130 245H188M130 328H188M130 415H188"/></g>
<g fill="#3b2a18"><circle cx="190" cy="165" r="11"/><circle cx="190" cy="245" r="11"/><circle cx="190" cy="328" r="11"/><circle cx="190" cy="415" r="11"/></g>
</g>
<!-- CALCULATOR same origin -->
<g transform="translate(700,232) scale(.17568)">
<rect x="935" y="25" width="387" height="516" rx="24" fill="url(#gCalc)" stroke="#4d4d4d" stroke-width="6"/>
<path d="M935 200V49a24 24 0 0 1 24-24H1298a24 24 0 0 1 24 24V200Z" fill="#3b3b3b"/>
<rect x="962" y="78" width="336" height="108" fill="#c6cac2" stroke="#8b8f88" stroke-width="5"/>
<text x="1290" y="170" font-family="Liberation Mono, monospace" font-weight="bold" font-size="112" text-anchor="end" fill="#2e302c" textLength="190" lengthAdjust="spacingAndGlyphs">1250</text>
<text x="1098" y="170" font-family="Liberation Mono, monospace" font-size="112" text-anchor="end" fill="#aeb3aa" textLength="130" lengthAdjust="spacingAndGlyphs">000</text>
<g fill="url(#gKey)">
<rect x="1034" y="229" width="52" height="52" rx="5"/><rect x="1101" y="229" width="52" height="52" rx="5"/><rect x="1169" y="229" width="52" height="52" rx="5"/>
<rect x="1034" y="300" width="52" height="52" rx="5"/><rect x="1101" y="300" width="52" height="52" rx="5"/><rect x="1169" y="300" width="52" height="52" rx="5"/>
<rect x="1034" y="372" width="52" height="52" rx="5"/><rect x="1101" y="372" width="52" height="52" rx="5"/><rect x="1169" y="372" width="52" height="52" rx="5"/>
<rect x="1034" y="443" width="52" height="52" rx="5"/><rect x="1101" y="443" width="52" height="52" rx="5"/>
</g>
<g fill="url(#gKeyD)">
<rect x="966" y="229" width="52" height="52" rx="5"/><rect x="966" y="300" width="52" height="52" rx="5"/><rect x="966" y="372" width="52" height="52" rx="5"/>
<rect x="1236" y="229" width="52" height="52" rx="5"/><rect x="1236" y="300" width="52" height="52" rx="5"/><rect x="1236" y="372" width="52" height="123" rx="5"/>
<rect x="1169" y="443" width="52" height="52" rx="5"/>
</g>
<rect x="966" y="443" width="52" height="52" rx="5" fill="#d22b2b"/>
</g>
<!-- CASH REGISTER zoom origin (960,232) -->
<g transform="translate(960,232) scale(.17568)">
<ellipse cx="420" cy="450" rx="270" ry="45" fill="#000" opacity=".1" filter="url(#fBlur)"/>
<path d="M155 365L405 415V490L155 440Z" fill="url(#gDraw)" stroke="#a9c0d6" stroke-width="3"/>
<path d="M405 415L650 275V350L405 490Z" fill="#8aa8c6"/>
<path d="M155 365L400 225L650 275L405 415Z" fill="#c9d9e8"/>
<path d="M172 385L385 428V470L172 425Z" fill="none" stroke="#a3bcd3" stroke-width="3"/><circle cx="365" cy="445" r="7" fill="#7d95ad"/>
<path d="M175 325L300 245L640 262L650 275L430 400L175 345Z" fill="#c7c7c2"/>
<path d="M175 325L300 245L560 290L430 385Z" fill="#e9e9e5"/>
<path d="M430 385L560 290L640 262V282L430 402Z" fill="#aeaea9"/>
<path d="M175 325L430 385V402L175 345Z" fill="#d6d6d1"/>
<g fill="#fdfdfd" stroke="#c5c5c0" stroke-width="2"><path d="M262 295l22-14 28 6-22 14z"/><path d="M300 270l22-14 28 6-22 14z"/><path d="M318 305l22-14 28 6-22 14z"/><path d="M356 280l22-14 28 6-22 14z"/><path d="M232 318l22-14 50 10-22 14z"/><path d="M300 330l22-14 28 6-22 14z"/></g>
<path d="M360 330l22-14 36 7-22 14z" fill="#7cc28a"/><path d="M398 304l22-14 30 6-22 14z" fill="#9cc0e8"/><path d="M430 284l22-14 30 6-22 14z" fill="#9cc0e8"/>
<path d="M300 240L385 150L600 160L630 180V232L545 288Z" fill="#efcf6c"/>
<path d="M600 160L630 180V232L545 288L560 200Z" fill="#e3bb4e"/>
<path d="M330 215L355 190L548 222L520 258Z" fill="#39392f"/><path d="M480 228l35 6-10 14-35-6z" fill="#4f8f55"/>
<path d="M395 150L420 78C430 68 520 78 535 95C545 110 540 125 528 132L498 122L478 168Z" fill="#f4f4f4" stroke="#cfcfcf" stroke-width="3"/>
<path d="M498 122C510 105 500 90 480 88" fill="none" stroke="#c5c5c5" stroke-width="4"/>
</g>
</svg>



<div class="a" style="left:0;top:68px;width:1px;height:700px;background:#a8a8a8"></div>
<!-- BOTTOM -->
<div class="a" id="tabs"></div>
<svg class="a" style="left:28px;top:726px" width="5" height="8"><path d="M4.500 0v8l-4.500-4z" fill="#c0c0c0"/></svg>
<svg class="a" style="left:56px;top:726px" width="5" height="8"><path d="M0 0v8l4.500-4z" fill="#217346"/></svg>
<div class="a" style="left:545px;top:716px;width:80px;height:25px;background:#fff"></div>
<div class="a" style="left:545px;top:740px;width:80px;height:2px;background:#217346"></div>
<div class="a sv" style="left:100px"></div>
<div class="a sv" style="left:159px"></div>
<div class="a sv" style="left:235px"></div>
<div class="a sv" style="left:326px"></div>
<div class="a sv" style="left:459px"></div>
<div class="a sv" style="left:707px"></div>
<div class="a sv" style="left:773px"></div>
<div class="a sv" style="left:842px"></div>
<div class="a sv" style="left:914px"></div>
<div class="a sv" style="left:974px"></div>
<div class="a sv" style="left:1044px"></div>
<div class="t st" style="left:114px">Inicio</div>
<div class="t st" style="left:172px">Almacén</div>
<div class="t st" style="left:248px">Empleados</div>
<div class="t st" style="left:340px">Compras y ventas</div>
<div class="t st" style="left:472px">Productos</div>
<div class="t st" style="left:637px">imágenes</div>
<div class="t st" style="left:719px">Gastos</div>
<div class="t st" style="left:785px">Factura</div>
<div class="t st" style="left:855px">Clientes</div>
<div class="t st" style="left:926px">Enero</div>
<div class="t st" style="left:986px">Febrero</div>
<div class="t st" style="left:557px;font-weight:bold;color:#217346;font-size:12.6px">Catálogo</div>
<div class="t st" style="left:1056px;font-weight:bold;color:#217346;top:722px">...</div>
<svg class="a" style="left:1081px;top:723px" width="15" height="15" fill="none" stroke="#6a6a6a"><circle cx="7.500" cy="7.500" r="6.500"/><path d="M7.500 4v7M4 7.500h7" stroke-width="1.300"/></svg>
<svg class="a" style="left:1116px;top:724px" width="2" height="12" fill="#a0a0a0"><rect y="0" width="1.500" height="1.500"/><rect y="4.500" width="1.500" height="1.500"/><rect y="9" width="1.500" height="1.500"/></svg>
<div class="a box" style="left:1134px;top:723px;width:15px;height:15px"></div>
<svg class="a" style="left:1139px;top:726.500px" width="5" height="8"><path d="M4.500 0v8l-4.500-4z" fill="#555"/></svg>
<div class="a box" style="left:1149px;top:723px;width:166px;height:15px;border-color:#c8c8c8"></div>
<div class="a" style="left:1315px;top:723px;width:14px;height:15px;background:#d6d6d6"></div>
<div class="a box" style="left:1329px;top:723px;width:15px;height:15px"></div>
<svg class="a" style="left:1334.500px;top:726.500px" width="5" height="8"><path d="M0 0v8l4.500-4z" fill="#555"/></svg>
<div class="a" id="status"></div>
<div class="t" style="left:9px;top:750px;font-size:11px;color:#444">Listo</div>
<svg class="a" style="left:79px;top:750px" width="13" height="13" fill="none"><circle cx="2.500" cy="2.500" r="2.500" fill="#555"/><rect x="1.500" y="5.500" width="10" height="7" stroke="#777"/><path d="M6 1.500h6v4" stroke="#777"/><path d="M1.500 8h10M5 5.500v7M8.500 5.500v7" stroke="#999"/></svg>
<div class="a" style="left:1081px;top:745px;width:37px;height:23px;background:#c6c6c6"></div>
<svg class="a" style="left:1091px;top:749px" width="14" height="14" fill="none" stroke="#555"><rect x=".5" y=".5" width="13" height="13"/><path d="M.5 5h13M.5 9.500h13M5 .5v13M9.500 .5v13"/></svg>
<svg class="a" style="left:1131px;top:749px" width="14" height="14" fill="none" stroke="#666"><rect x=".5" y=".5" width="13" height="13"/><rect x="3.500" y="3.500" width="7" height="7"/><path d="M5 6h4M5 8h4"/></svg>
<svg class="a" style="left:1169px;top:749px" width="14" height="14" fill="none" stroke="#666"><rect x=".5" y=".5" width="13" height="13"/><path d="M5 .5v8h8"/></svg>
<div class="a" style="left:1199px;top:756px;width:6px;height:2px;background:#555"></div>
<div class="a" style="left:1210px;top:756px;width:98px;height:1px;background:#8a8a8a"></div>
<div class="a" style="left:1257px;top:751px;width:4px;height:11px;background:#444"></div>
<svg class="a" style="left:1313px;top:753px" width="8" height="8" stroke="#555" stroke-width="1.600"><path d="M0 4h8M4 0v8"/></svg>
<div class="t" style="left:1331px;top:751px;font-size:11px;color:#444">100%</div>
<svg class="a" style="left:0;top:0" width="1366" height="768">
<defs>
<linearGradient id="gWaveL" x1="0" y1="0" x2="1" y2="0"><stop offset="0" stop-color="#74c556"/><stop offset="1" stop-color="#d9f0bd"/></linearGradient>
<linearGradient id="gWaveR" x1="1" y1="0" x2="0" y2="0"><stop offset="0" stop-color="#74c556"/><stop offset="1" stop-color="#d9f0bd"/></linearGradient>
<radialGradient id="gScr" cx=".5" cy=".45" r=".7"><stop offset="0" stop-color="#bfe7f8"/><stop offset="1" stop-color="#6db8ea"/></radialGradient>
<linearGradient id="gDig" x1="0" y1="0" x2="0" y2="1"><stop offset="0" stop-color="#fff" stop-opacity="0"/><stop offset=".45" stop-color="#9a9a9a" stop-opacity=".75"/><stop offset="1" stop-color="#7d7d7d" stop-opacity=".95"/></linearGradient>
<filter id="fB2" x="-20%" y="-20%" width="140%" height="140%"><feGaussianBlur stdDeviation="20"/></filter>
<linearGradient id="gMaskD" gradientUnits="userSpaceOnUse" x1="0" y1="682" x2="0" y2="700"><stop offset="0" stop-color="#fff" stop-opacity="0"/><stop offset="1" stop-color="#fff" stop-opacity="1"/></linearGradient><mask id="mDig" maskUnits="userSpaceOnUse" x="1180" y="670" width="80" height="70"><rect x="1180" y="670" width="80" height="70" fill="url(#gMaskD)"/></mask>
<filter id="fGlow" x="-20%" y="-30%" width="140%" height="190%"><feMorphology in="SourceAlpha" operator="dilate" radius="1" result="d"/><feGaussianBlur in="d" stdDeviation="2" result="b"/><feOffset in="b" dy="3" result="o"/><feFlood flood-color="#5e5e5e" flood-opacity=".9" result="f"/><feComposite in="f" in2="o" operator="in" result="s"/><feMerge><feMergeNode in="s"/><feMergeNode in="SourceGraphic"/></feMerge></filter>
<filter id="fB3" x="-20%" y="-20%" width="140%" height="140%"><feGaussianBlur stdDeviation="2.500"/></filter>
</defs>
<!-- BAG zoom origin (420,350) s=1/6.4 -->
<g transform="translate(420,350) scale(.15625)">
<path d="M186 385C195 320 250 285 330 262C395 240 405 120 470 100C545 85 540 180 545 250C552 320 590 350 610 385" fill="none" stroke="#1c2b39" stroke-width="15" stroke-linecap="round"/>
<circle cx="186" cy="402" r="22" fill="#fff" stroke="#1c2b39" stroke-width="11"/><circle cx="610" cy="402" r="22" fill="#fff" stroke="#1c2b39" stroke-width="11"/>
<path d="M200 405H612C640 470 640 560 600 640C570 690 480 700 400 700C320 700 235 690 205 640C165 560 170 470 200 405Z" fill="#1c2b39"/>
<path d="M215 420C195 490 200 570 235 625C265 665 330 672 400 672C470 672 540 665 568 625C602 570 605 490 588 420" fill="none" stroke="#dfe5ea" stroke-width="9"/>
<g fill="#fff"><circle cx="243" cy="420" r="9"/><circle cx="232" cy="472" r="9"/><circle cx="228" cy="525" r="9"/><circle cx="232" cy="578" r="9"/><circle cx="252" cy="622" r="9"/><circle cx="298" cy="647" r="9"/><circle cx="348" cy="657" r="9"/><circle cx="400" cy="660" r="9"/><circle cx="452" cy="657" r="9"/><circle cx="502" cy="647" r="9"/><circle cx="548" cy="622" r="9"/><circle cx="570" cy="578" r="9"/><circle cx="574" cy="525" r="9"/><circle cx="570" cy="472" r="9"/><circle cx="558" cy="420" r="9"/></g>
<rect x="358" y="585" width="87" height="47" fill="#fff"/>
</g>
<!-- LOGO zoom origin (1090,590) s=1/5.909 -->
<g transform="translate(1090,590) scale(.16923)">
<g filter="url(#fB3)" fill="none" stroke-linecap="round" opacity=".88"><g stroke="url(#gWaveL)"><path d="M148 88Q70 230.0 148 372" stroke-width="40"/><path d="M222 118Q148 231.0 222 344" stroke-width="38"/><path d="M290 146Q222 231.0 290 316" stroke-width="36"/><path d="M358 178Q304 232.0 358 286" stroke-width="32"/><path d="M428 206Q384 234.0 428 262" stroke-width="28"/></g><g stroke="url(#gWaveR)"><path d="M1078 88Q1156 230.0 1078 372" stroke-width="40"/><path d="M1004 118Q1078 231.0 1004 344" stroke-width="38"/><path d="M936 146Q1004 231.0 936 316" stroke-width="36"/><path d="M868 178Q922 232.0 868 286" stroke-width="32"/><path d="M798 206Q842 234.0 798 262" stroke-width="28"/></g></g>
<rect x="458" y="90" width="320" height="246" rx="14" fill="#9ea3aa"/>
<rect x="472" y="106" width="292" height="210" rx="6" fill="url(#gScr)"/>
<path d="M585 336H655L662 385H578Z" fill="#cfd1d4"/>
<rect x="528" y="380" width="180" height="16" rx="4" fill="#c3c5c8"/>
<path d="M478 400H748L766 455C768 468 760 472 750 472H474C464 472 456 468 460 455Z" fill="#d6d6d6"/><path d="M462 455H764V466C764 470 758 472 750 472H474C466 472 462 470 462 466Z" fill="#b4b4b4"/>
<rect x="610" y="560" width="310" height="170" fill="url(#gDig)" filter="url(#fB2)" opacity=".7"/>
</g>
<g font-family="'Liberation Sans',sans-serif" font-weight="bold" font-size="43">
<text transform="translate(1101.500,711) scale(.418,1.050)" fill="#6b7b98" stroke="#6b7b98" stroke-width="1.200">EXPERTO</text>
<g mask="url(#mDig)"><text transform="translate(1192.500,711) scale(.5,1)" fill="#fff" font-size="38" filter="url(#fGlow)">digital</text></g>
<text transform="translate(1248,711) scale(.435,1.050)" fill="#6b7b98" stroke="#6b7b98" stroke-width="1.200">.NET</text>
</g>
</svg>
<div class="a" style="left:0;top:0;width:1px;height:68px;background:#185a36"></div>
<div class="a" style="left:0;top:0;width:1366px;height:1px;background:#1c6a3f"></div>
<div class="a" style="left:1364px;top:0;width:2px;height:768px;background:#000"></div>
</body>
</html>
